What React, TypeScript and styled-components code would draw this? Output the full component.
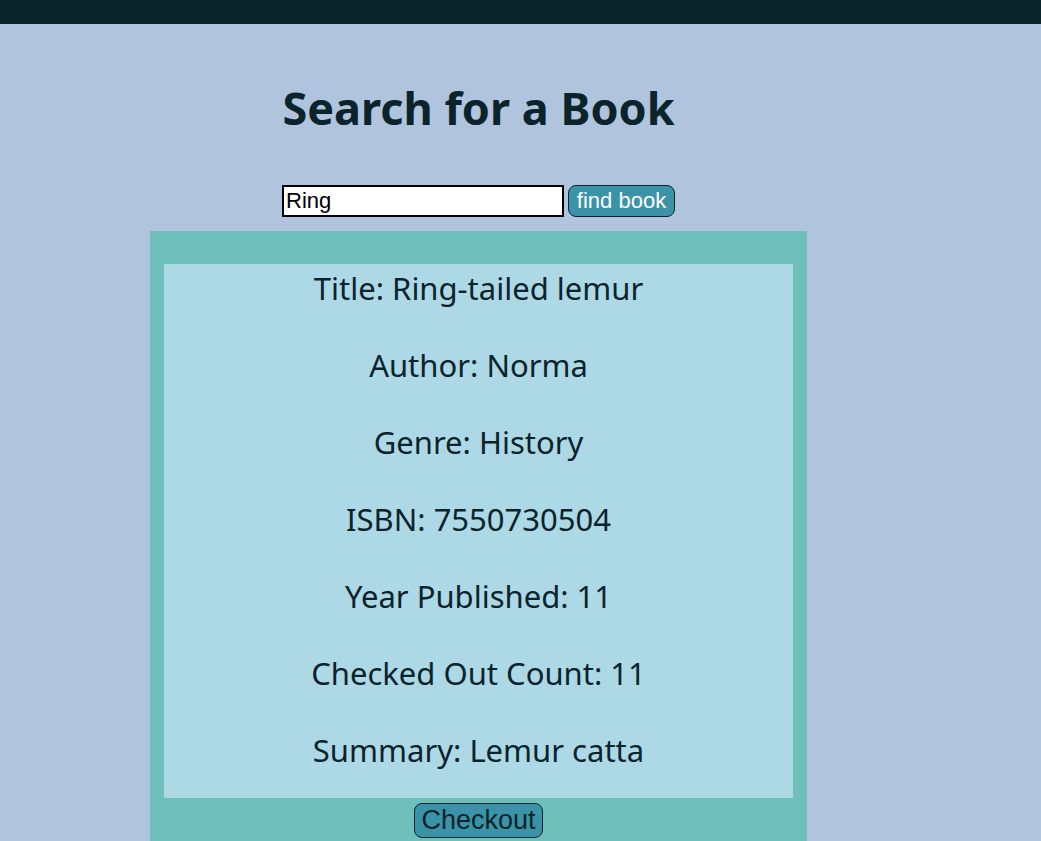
import { createGlobalStyle, styled } from "styled-components";

const GlobalStyle = createGlobalStyle`
  body {
    margin: 0;
    background-color: #b0c4de;
    font-family: "Noto Sans", "Open Sans", sans-serif;
    color: #0b232b;
  }
`;

const TopBar = styled.div`
  height: 24px;
  background-color: #0b232b;
`;

const Page = styled.main`
  width: 657px;
  margin-left: 150px;
  display: flex;
  flex-direction: column;
  align-items: center;
`;

const Heading = styled.h1`
  margin: 52px 0 0;
  font-size: 45px;
  line-height: 64px;
  font-weight: 700;
  color: #0b232b;
`;

const SearchRow = styled.form`
  display: flex;
  gap: 4px;
  margin-top: 45px;
`;

const SearchInput = styled.input`
  box-sizing: border-box;
  width: 282px;
  height: 32px;
  border: 2px solid #000;
  padding: 0 2px;
  font-family: "Liberation Sans", Arial, sans-serif;
  font-size: 22px;
  color: #000;
  background: #fff;
  outline: none;
`;

const Button = styled.button<{ $size: number; $light?: boolean }>`
  box-sizing: border-box;
  border: 1px solid #0b232b;
  border-radius: 8px;
  background-color: #3b93a7;
  color: ${(p) => (p.$light ? "#ffffff" : "#0b232b")};
  font-family: "Liberation Sans", Arial, sans-serif;
  font-size: ${(p) => p.$size}px;
  padding: 0 6px;
  cursor: pointer;
`;

const FindButton = styled(Button)`
  height: 32px;
  width: 107px;
`;

const CheckoutButton = styled(Button)`
  height: 35px;
  width: 129px;
  margin-top: 5px;
`;

const Panel = styled.section`
  box-sizing: border-box;
  width: 657px;
  margin-top: 14px;
  padding: 33px 14px 14px;
  background-color: #6fbfbb;
  display: flex;
  flex-direction: column;
  align-items: center;
`;

const Details = styled.div`
  align-self: stretch;
  background-color: #add8e6;
  padding: 1px 0 25px;
  display: flex;
  flex-direction: column;
  align-items: center;
  gap: 31px;
`;

const Field = styled.p`
  margin: 0;
  font-size: 31px;
  line-height: 46px;
  color: #0b232b;
`;

const book = {
  title: "Ring-tailed lemur",
  author: "Norma",
  genre: "History",
  isbn: "7550730504",
  year: 11,
  checkedOut: 11,
  summary: "Lemur catta",
};

export default function App() {
  const fields = [
    ["Title", book.title],
    ["Author", book.author],
    ["Genre", book.genre],
    ["ISBN", book.isbn],
    ["Year Published", book.year],
    ["Checked Out Count", book.checkedOut],
    ["Summary", book.summary],
  ];
  return (
    <>
      <GlobalStyle />
      <TopBar />
      <Page>
        <Heading>Search for a Book</Heading>
        <SearchRow onSubmit={(e) => e.preventDefault()}>
          <SearchInput defaultValue="Ring" />
          <FindButton $size={22} $light type="submit">
            find book
          </FindButton>
        </SearchRow>
        <Panel>
          <Details>
            {fields.map(([label, value]) => (
              <Field key={label}>
                {label}: {value}
              </Field>
            ))}
          </Details>
          <CheckoutButton $size={27}>Checkout</CheckoutButton>
        </Panel>
      </Page>
    </>
  );
}
